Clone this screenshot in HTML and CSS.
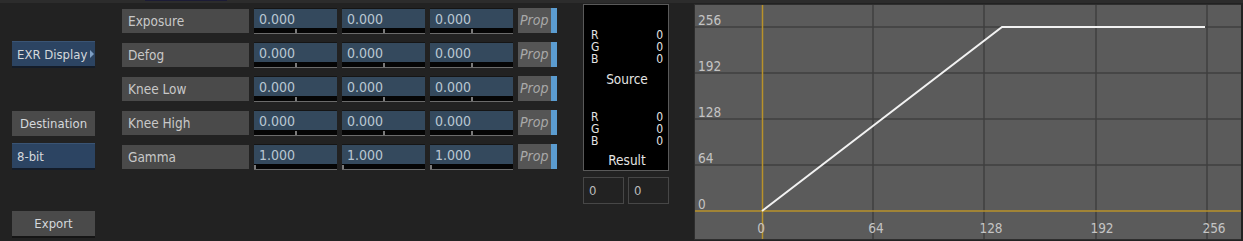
FILE: index.html
```html
<!DOCTYPE html>
<html lang="en">
<head>
    <meta charset="UTF-8">
    <title>EXR Display</title>
    <link rel="stylesheet" href="styles.css">
</head>
<body>
    <div class="topbar"><span class="tab"></span></div>
    <div class="panel">
        <div class="side">
            <div class="btn navy exr">EXR Display<span class="arrow"></span></div>
            <div class="btn grey dest">Destination</div>
            <div class="btn navy bits">8-bit</div>
            <div class="btn grey export">Export</div>
        </div>

        <div class="params">
            <div class="row">
                <div class="label">Exposure</div>
                <div class="field"><span>0.000</span><i class="tick"></i></div>
                <div class="field"><span>0.000</span><i class="tick"></i></div>
                <div class="field"><span>0.000</span><i class="tick"></i></div>
                <div class="prop">Prop</div>
            </div>
            <div class="row">
                <div class="label">Defog</div>
                <div class="field"><span>0.000</span><i class="tick"></i></div>
                <div class="field"><span>0.000</span><i class="tick"></i></div>
                <div class="field"><span>0.000</span><i class="tick"></i></div>
                <div class="prop">Prop</div>
            </div>
            <div class="row">
                <div class="label">Knee Low</div>
                <div class="field"><span>0.000</span><i class="tick"></i></div>
                <div class="field"><span>0.000</span><i class="tick"></i></div>
                <div class="field"><span>0.000</span><i class="tick"></i></div>
                <div class="prop">Prop</div>
            </div>
            <div class="row">
                <div class="label">Knee High</div>
                <div class="field"><span>0.000</span><i class="tick"></i></div>
                <div class="field"><span>0.000</span><i class="tick"></i></div>
                <div class="field"><span>0.000</span><i class="tick"></i></div>
                <div class="prop">Prop</div>
            </div>
            <div class="row">
                <div class="label">Gamma</div>
                <div class="field"><span>1.000</span><i class="tick left"></i></div>
                <div class="field"><span>1.000</span><i class="tick left"></i></div>
                <div class="field"><span>1.000</span><i class="tick left"></i></div>
                <div class="prop">Prop</div>
            </div>
        </div>

        <div class="info">
            <div class="readout">
                <div class="rgb">
                    <div class="line"><span>R</span><span>0</span></div>
                    <div class="line"><span>G</span><span>0</span></div>
                    <div class="line"><span>B</span><span>0</span></div>
                </div>
                <div class="caption">Source</div>
                <div class="rgb second">
                    <div class="line"><span>R</span><span>0</span></div>
                    <div class="line"><span>G</span><span>0</span></div>
                    <div class="line"><span>B</span><span>0</span></div>
                </div>
                <div class="caption">Result</div>
            </div>
            <div class="coords">
                <div class="coord">0</div>
                <div class="coord">0</div>
            </div>
        </div>

        <div class="graph">
            <svg width="546" height="234" viewBox="0 0 546 234">
                <g stroke="#3f3f3f" stroke-width="1.5">
                    <line x1="0" y1="22" x2="546" y2="22"/>
                    <line x1="0" y1="68" x2="546" y2="68"/>
                    <line x1="0" y1="114" x2="546" y2="114"/>
                    <line x1="0" y1="160" x2="546" y2="160"/>
                    <line x1="178" y1="0" x2="178" y2="234"/>
                    <line x1="289" y1="0" x2="289" y2="234"/>
                    <line x1="401" y1="0" x2="401" y2="234"/>
                    <line x1="512" y1="0" x2="512" y2="234"/>
                </g>
                <g stroke="#b8922a" stroke-width="1.5">
                    <line x1="0" y1="206" x2="546" y2="206"/>
                    <line x1="67.5" y1="0" x2="67.5" y2="234"/>
                </g>
                <polyline points="67,206 307,22 510,22" fill="none" stroke="#f2f2f2" stroke-width="2"/>
                <g class="ylab">
                    <text x="3" y="20">256</text>
                    <text x="3" y="66">192</text>
                    <text x="3" y="112">128</text>
                    <text x="3" y="158">64</text>
                    <text x="3" y="204">0</text>
                </g>
                <g class="xlab">
                    <text x="66" y="228">0</text>
                    <text x="181" y="228">64</text>
                    <text x="296" y="228">128</text>
                    <text x="407" y="228">192</text>
                    <text x="519" y="228">256</text>
                </g>
            </svg>
        </div>
    </div>
</body>
</html>
```

FILE: styles.css
```css
body {
    margin: 0;
    padding: 0;
    width: 1243px;
    height: 241px;
    overflow: hidden;
    background-color: #222222;
    font-family: "DejaVu Sans Condensed", "Liberation Sans Narrow", "Liberation Sans", sans-serif;
    font-size: 13px;
    color: #c6c6c6;
}
.topbar {
    height: 3px;
    background-color: #2c2c2c;
}
.topbar .tab {
    display: block;
    margin-left: 145px;
    width: 82px;
    height: 1px;
    background-color: #1c1c36;
}
.panel {
    display: flex;
    align-items: flex-start;
}

/* left buttons */
.side {
    display: flex;
    flex-direction: column;
    margin-left: 12px;
    width: 83px;
}
.btn {
    box-sizing: border-box;
    display: flex;
    align-items: center;
    padding-left: 5px;
    color: #d4d8dc;
    font-size: 13px;
}
.btn.navy {
    background-color: #2c4462;
    border-top: 1px solid #3a5474;
    border-bottom: 2px solid #141c28;
    height: 27px;
}
.btn.grey {
    background-color: #4a4a4a;
    justify-content: center;
    padding-left: 0;
    height: 25px;
}
.exr {
    margin-top: 38px;
    position: relative;
}
.arrow {
    position: absolute;
    right: 1px;
    top: 8px;
    width: 0;
    height: 0;
    border-top: 4px solid transparent;
    border-bottom: 4px solid transparent;
    border-left: 4px solid #7f9fc4;
}
.dest {
    margin-top: 43px;
}
.bits {
    margin-top: 7px;
}
.export {
    margin-top: 41px;
    border-bottom: 2px solid #151515;
    height: 27px !important;
}

/* parameter grid */
.params {
    margin-left: 27px;
    margin-top: 5px;
    display: flex;
    flex-direction: column;
    gap: 8px;
}
.row {
    display: flex;
    gap: 5px;
    height: 26px;
}
.label {
    box-sizing: border-box;
    width: 127px;
    height: 24px;
    margin-top: 1px;
    padding-left: 6px;
    line-height: 24px;
    background-color: #4a4a4a;
    color: #c8c8c8;
    font-size: 13.5px;
}
.field {
    box-sizing: border-box;
    position: relative;
    width: 83px;
    height: 26px;
    border-top: 1px solid #151515;
    background-color: #34495d;
    border-bottom: 6px solid #050505;
}
.field::after {
    content: "";
    position: absolute;
    left: 0;
    right: 0;
    bottom: -6px;
    height: 1px;
    background-color: #6b6b6b;
}
.field span {
    display: block;
    padding-left: 5px;
    line-height: 20px;
    color: #b9c6d2;
    font-size: 14px;
}
.tick {
    position: absolute;
    left: 41px;
    bottom: -6px;
    width: 2px;
    height: 5px;
    background-color: #7a7a7a;
}
.tick.left {
    left: 0;
}
.prop {
    box-sizing: border-box;
    width: 39px;
    height: 25px;
    padding-left: 2px;
    line-height: 25px;
    background-color: #555555;
    border-right: 6px solid #5b9cd0;
    font-style: italic;
    font-size: 14px;
    color: #a9a9a9;
}

/* readout */
.info {
    margin-left: 26px;
    margin-top: 1px;
    width: 86px;
}
.readout {
    box-sizing: border-box;
    height: 167px;
    background-color: #000000;
    border: 1px solid #5a5a5a;
    padding: 24px 5px 0 7px;
    color: #e4e4e4;
    font-size: 12px;
}
.rgb .line {
    display: flex;
    justify-content: space-between;
    line-height: 12px;
    height: 12px;
}
.rgb.second {
    margin-top: 25px;
}
.caption {
    text-align: center;
    line-height: 14px;
    margin-top: 7px;
    font-size: 13.5px;
}
.rgb.second + .caption {
    margin-top: 6px;
}
.coords {
    display: flex;
    gap: 4px;
    margin-top: 6px;
}
.coord {
    box-sizing: border-box;
    width: 41px;
    height: 27px;
    border: 1px solid #474747;
    padding-left: 5px;
    line-height: 25px;
    color: #bcbcbc;
}

/* curve graph */
.graph {
    margin-left: 25px;
    margin-top: 1px;
    width: 546px;
    height: 234px;
    background-color: #5b5b5b;
    border: 1px solid #2e2e2e;
    border-right: none;
}
.graph svg {
    display: block;
}
.graph text {
    font-family: "DejaVu Sans Condensed", "Liberation Sans Narrow", "Liberation Sans", sans-serif;
    font-size: 13.5px;
    fill: #c4c4c4;
}
.xlab text {
    text-anchor: middle;
}
```
